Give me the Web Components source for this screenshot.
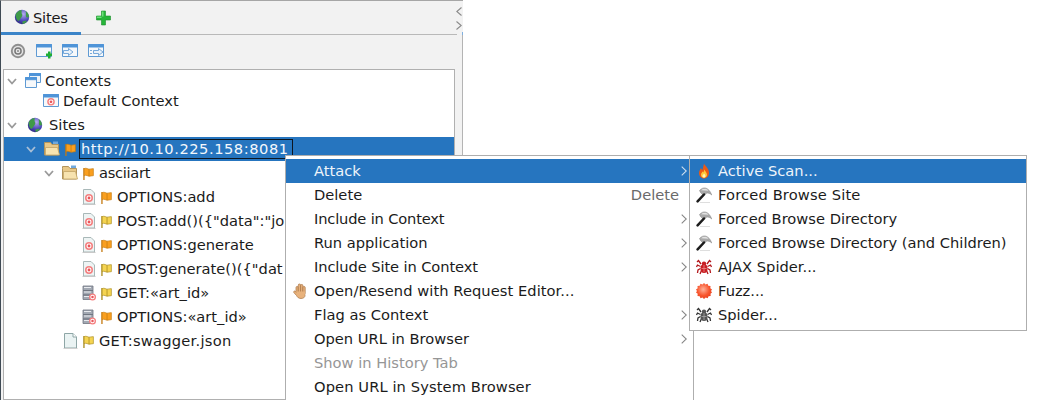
<!DOCTYPE html>
<html>
<head>
<meta charset="utf-8">
<title>Sites</title>
<style>
  html, body { margin: 0; height: 400px; overflow: hidden; background: #fff; }
  body { font: 14.67px "DejaVu Sans", sans-serif; color: #1b1b1b; }
</style>
</head>
<body>
<zap-window>
  <zap-panel>
    <zap-tabs slot="tabs"></zap-tabs>
    <zap-toolbar slot="toolbar">
      <zap-icon name="target"></zap-icon>
      <zap-icon name="winplus"></zap-icon>
      <zap-icon name="winin"></zap-icon>
      <zap-icon name="winout"></zap-icon>
    </zap-toolbar>
    <zap-tree slot="tree">
      <zap-row indent="2" open h="20"><zap-icon name="contexts"></zap-icon><span style="letter-spacing:.15px">Contexts</span></zap-row>
      <zap-row indent="39" h="20"><zap-icon name="context"></zap-icon><span>Default Context</span></zap-row>
      <zap-row indent="2" open h="24" top="2" gap="6" pad="2"><zap-icon name="globe"></zap-icon><span>Sites</span></zap-row>
      <zap-row indent="21" open selected h="24" gap="5"><zap-icon name="folder"></zap-icon><zap-icon name="flag" small></zap-icon><span style="letter-spacing:.53px">http://10.10.225.158:8081</span></zap-row>
      <zap-row indent="39" open h="24" gap="5"><zap-icon name="folder"></zap-icon><zap-icon name="flag" small></zap-icon><span style="letter-spacing:-.3px">asciiart</span></zap-row>
      <zap-row indent="76" h="24" gap="5"><zap-icon name="filetarget"></zap-icon><zap-icon name="flag" small></zap-icon><span>OPTIONS:add</span></zap-row>
      <zap-row indent="76" h="24" gap="5"><zap-icon name="filetarget"></zap-icon><zap-icon name="flag" small yellow></zap-icon><span>POST:add()({"data":"jo</span></zap-row>
      <zap-row indent="76" h="24" gap="5"><zap-icon name="filetarget"></zap-icon><zap-icon name="flag" small></zap-icon><span>OPTIONS:generate</span></zap-row>
      <zap-row indent="76" h="24" gap="5"><zap-icon name="filetarget"></zap-icon><zap-icon name="flag" small yellow></zap-icon><span>POST:generate()({"dat</span></zap-row>
      <zap-row indent="76" h="24" gap="5"><zap-icon name="server"></zap-icon><zap-icon name="flag" small yellow></zap-icon><span>GET:«art_id»</span></zap-row>
      <zap-row indent="76" h="24" gap="5"><zap-icon name="server"></zap-icon><zap-icon name="flag" small></zap-icon><span>OPTIONS:«art_id»</span></zap-row>
      <zap-row indent="58" h="24" gap="5"><zap-icon name="file"></zap-icon><zap-icon name="flag" small yellow></zap-icon><span style="letter-spacing:.25px">GET:swagger.json</span></zap-row>
    </zap-tree>
  </zap-panel>

  <zap-menu style="left:285px;top:155px;width:409px;height:260px">
    <zap-item active arrow>Attack</zap-item>
    <zap-item shortcut="Delete">Delete</zap-item>
    <zap-item arrow style="letter-spacing:-.17px">Include in Context</zap-item>
    <zap-item arrow>Run application</zap-item>
    <zap-item arrow style="letter-spacing:-.1px">Include Site in Context</zap-item>
    <zap-item style="letter-spacing:.06px"><zap-icon slot="icon" name="hand"></zap-icon>Open/Resend with Request Editor...</zap-item>
    <zap-item arrow>Flag as Context</zap-item>
    <zap-item arrow>Open URL in Browser</zap-item>
    <zap-item disabled>Show in History Tab</zap-item>
    <zap-item style="letter-spacing:.1px">Open URL in System Browser</zap-item>
  </zap-menu>

  <zap-menu style="left:689px;top:155px;width:338px;height:176px">
    <zap-item active><zap-icon slot="icon" name="flame"></zap-icon>Active Scan...</zap-item>
    <zap-item style="letter-spacing:.15px"><zap-icon slot="icon" name="hammer"></zap-icon>Forced Browse Site</zap-item>
    <zap-item><zap-icon slot="icon" name="hammer"></zap-icon>Forced Browse Directory</zap-item>
    <zap-item><zap-icon slot="icon" name="hammer"></zap-icon>Forced Browse Directory (and Children)</zap-item>
    <zap-item><zap-icon slot="icon" name="spider" red></zap-icon>AJAX Spider...</zap-item>
    <zap-item><zap-icon slot="icon" name="fuzz"></zap-icon>Fuzz...</zap-item>
    <zap-item><zap-icon slot="icon" name="spider"></zap-icon>Spider...</zap-item>
  </zap-menu>
</zap-window>

<script>
const targetMark = (cx, cy, r) => `<circle cx="${cx}" cy="${cy}" r="${r}" fill="#f47f7f"/><circle cx="${cx}" cy="${cy}" r="${r * 0.62}" fill="#fff"/><circle cx="${cx}" cy="${cy}" r="${r * 0.36}" fill="#e9555a"/>`

const win = (inner) => `<path d="M.5 1.500h15v12H.5z" fill="#f6f8fa" stroke="#5f9ad3"/><path d="M.5 1.500h15v2.500H.5z" fill="#4f94d8" stroke="#4f94d8"/>${inner}`

const spiderLegs = `<path d="M5 5 2.500 1.500 1 3M11 5l2.500-3.500L15 3M4.500 7.500 1.500 6 .5 8M11.500 7.500l3-1.500 1 2M4.500 9.500 2 11l-.5 3M11.500 9.500 14 11l.5 3M5.500 11.500 4 15M10.500 11.500l1.500 3.500" fill="none" stroke="currentColor" stroke-width="1.300"/>`

const ICONS = {
	target: `<circle cx="8" cy="8" r="7.200" fill="#8f8f8f"/><circle cx="8" cy="8" r="5.300" fill="#e4e4e4"/><circle cx="8" cy="8" r="3.800" fill="#777"/><circle cx="8" cy="8" r="2.300" fill="#e6e6e6"/><circle cx="8" cy="8" r="1" fill="#888"/>`,
	winplus: win(`<path d="M10 10.500h2V8.500h2.500v2h1.500V13h-1.500v2.500H12V13h-2z" fill="#1fae35"/>`),
	winin: win(`<path d="M1.500 7.500h5V5.500L11 9 6.500 12.500v-2h-5z" fill="#e8f1fa" stroke="#6aa0d6" stroke-width=".9"/>`),
	winout: win(`<path d="M5.500 7.500h5V5.500L15 9l-4.500 3.500v-2h-5zM2 7.500h2M2 10.500h2" fill="#e8f1fa" stroke="#6aa0d6" stroke-width=".9"/>`),
	contexts: `<path d="M4.500 .5h11v9h-11z" fill="#eef3f8" stroke="#5f9ad3"/><path d="M4.500 .5h11v2h-11z" fill="#4f94d8" stroke="#4f94d8"/><path d="M.5 4.500h11v10H.5z" fill="#f6f8fa" stroke="#5f9ad3"/><path d="M.5 4.500h11v2.200H.5z" fill="#4f94d8" stroke="#4f94d8"/>`,
	context: win(targetMark(8, 8.800, 3.800)),
	globe: `<defs><radialGradient id="g" cx=".6" cy=".3" r=".8"><stop offset="0" stop-color="#b5aef0"/><stop offset=".6" stop-color="#4a45b8"/><stop offset="1" stop-color="#27246e"/></radialGradient></defs><circle cx="8" cy="8" r="7.200" fill="url(#g)"/><path d="M2 4.500C4 2 6 1 7.500 1c.5 1.500-.5 3 .5 4 1 1.500-.5 3-1.500 4.500C5.500 11 5 12 4 12 2 10 1 6.500 2 4.500zM11.500 2c2 1 3.500 3.500 3.500 6-1 .5-2.500 1-3-.5-.5-1 .5-3.500-.5-5.500zM8.500 12.500c1.500-1 3.500-1 4.500-.5-1 1.500-2.500 2.500-4 3-.5-.5-.8-1.500-.5-2.500z" fill="#3f9a49"/>`,
	plus: `<path d="M5.500 1h4v5h5v4h-5v5h-4v-5H.500V6h5z" fill="#27b53a" stroke="#1c8f2b" stroke-width=".6"/><path d="M6 6.500V1.500h1.500v5zM1 6.500h4.500V8H1z" fill="#6fe07c"/>`,
	folder: `<path d="M.5 3.500V1.500h6l1.500 2h6.500V14H.5z" fill="#e8c888" stroke="#b2945c"/><path d="M9 .5h5v2.500H9z" fill="#6fa8dc"/><path d="M1.500 6.500h12L15.500 14H1.500z" fill="#f7e3b0" stroke="#c2a366" stroke-width=".8"/>`,
	flag: `<path d="M.8 1v11" stroke="var(--pole)" stroke-width="1.200" fill="none"/><path d="M1 1.500c2-1 3.500.5 4.500.5s2.500-.5 4-.5V8C8 8 6.500 8.500 5.500 8.500S3 7 1 8z" fill="var(--flag)" stroke="var(--pole)" stroke-width=".6"/><path d="M5.500 2v6.500" stroke="var(--pole)" stroke-width=".7" fill="none"/>`,
	filetarget: `<path d="M3.500 .5h7.500l3.500 3.500v11h-11z" fill="#eef4f4" stroke="#a9b8b8"/><path d="M2.500 15.500h13" stroke="#c8c8c8"/>${targetMark(9, 9, 4)}`,
	file: `<path d="M2.500 .5h8.500l3.500 3.500v11h-12z" fill="#eaf3f3" stroke="#8ea6a6"/><path d="M11 .5V4h3.500" fill="#fff" stroke="#8ea6a6"/><path d="M1.500 15.500h14" stroke="#cfcfcf"/>`,
	server: `<path d="M3 1h10v4.500H3zM3 5.500h10V10H3zM3 10h10v4.500H3z" fill="#a2a8b2" stroke="#6f7580" stroke-width=".8"/><path d="M4 2.500h7M4 7h7M4 11.500h7" stroke="#e8eaee"/>${targetMark(12.500, 12, 3.500)}`,
	hand: `<g fill="#e8b27c" stroke="#a87242" stroke-width=".7"><rect x="4" y="3.500" width="2.300" height="8" rx="1.100"/><rect x="6.300" y="1" width="2.300" height="9" rx="1.100"/><rect x="8.600" y="1.500" width="2.300" height="9" rx="1.100"/><rect x="10.900" y="3.500" width="2.300" height="8" rx="1.100"/></g><path d="M4.200 8.500h8.800v3.500c0 2.300-1.800 3.500-4 3.500-2.400 0-3.500-1.200-4.500-3L1.800 9.500c-.6-1 .7-2 1.500-1.200z" fill="#e8b27c"/><path d="M13 11.500v1c0 2-1.800 3-4 3-2.400 0-3.500-1.200-4.500-3L1.800 9.500c-.6-1 .7-2 1.500-1.200L4.200 9.500" fill="none" stroke="#a87242" stroke-width=".7"/>`,
	flame: `<path d="M8 .5c.8 2.500 5 4.700 5 9.200 0 3.300-2.300 5.800-5 5.800s-5-2.500-5-5.500c0-2.300 1.300-3.200 2-5 .5 1 .8 1.500 1.500 2C7 5 7.500 2.500 8 .5z" fill="#ec5a16"/><path d="M8.200 6.500c.5 1.500 2.800 2.800 2.800 5.300 0 1.800-1.300 3-3 3s-3-1.200-3-3c0-1.500 1-2.300 1.500-3.300.5.500.8.700 1 1 .3-.8.500-2 .7-3z" fill="#ffc93a"/><path d="M8 10.500c.5.800 1.500 1.300 1.500 2.500 0 1-.7 1.500-1.500 1.500S6.500 14 6.500 13c0-1 1-1.600 1.500-2.500z" fill="#fff3b5"/>`,
	hammer: `<path d="M4 15.500h10" stroke="#dedede"/><path d="M3.500 3.500C7-.5 12.500-.5 15.800 8 14 6.500 12 5.500 10 6.500L7.500 8.500 4.500 5.500z" fill="#a9a9a9" stroke="#808080" stroke-width=".5"/><path d="M5 3.300C7.500 1.300 10.500 1.300 12.500 3.800z" fill="#e2e2e2"/><path d="M1.600 14.400 8 7.500" stroke="#1d1d1d" stroke-width="2.500" stroke-linecap="round"/>`,
	spider: `<g style="color:var(--legs)">${spiderLegs}</g><ellipse cx="8" cy="4.500" rx="2.200" ry="2" fill="var(--body)"/><ellipse cx="8" cy="9.500" rx="3.500" ry="4.500" fill="var(--body)"/><path d="M8 6v7M5.500 9.500h5" stroke="var(--mark)" stroke-width=".8"/>`,
	fuzz: `<defs><radialGradient id="f" cx=".45" cy=".4" r=".7"><stop offset="0" stop-color="#ffb199"/><stop offset=".55" stop-color="#f8562e"/><stop offset="1" stop-color="#e23a1a"/></radialGradient></defs><path d="M8 0l1.500 1.500L11.500 .7l.8 2 2.200.2-.2 2.300L16 6.500 15 8l1 1.500-1.500 1.300.2 2.300-2.200.2-.8 2-2-.8L8 16l-1.500-1.500-2 .8-.8-2-2.200-.2.200-2.300L0 9.500 1 8 0 6.500l1.700-1.300-.2-2.300 2.200-.2.800-2 2 .8z" fill="url(#f)"/>`
}

class ZapIcon extends HTMLElement {
	connectedCallback() {
		const shadow = this.attachShadow({ mode: 'open' })
		const small = this.hasAttribute('small')
		shadow.innerHTML = `
      <style>
        :host {
          display: block;
          flex: none;
          width: ${small ? 11 : 16}px;
          height: ${small ? 13 : 16}px;
          --flag: ${this.hasAttribute('yellow') ? '#f5d451' : '#fa9f1e'};
          --pole: ${this.hasAttribute('yellow') ? '#a88a1c' : '#c57a10'};
          --legs: ${this.hasAttribute('red') ? '#b3171b' : '#333'};
          --body: ${this.hasAttribute('red') ? '#c81e23' : '#555'};
          --mark: ${this.hasAttribute('red') ? '#f08a8a' : '#aaa'};
        }
        svg { display: block; width: 100%; height: 100%; }
      </style>
      <svg viewBox="0 0 ${small ? '10 12' : '16 16'}">${ICONS[this.getAttribute('name')] || ''}</svg>
    `
	}
}

class ZapWindow extends HTMLElement {
	connectedCallback() {
		const shadow = this.attachShadow({ mode: 'open' })
		shadow.innerHTML = `
      <style>
        :host { display: block; position: relative; width: 1039px; height: 400px; overflow: hidden; }
      </style>
      <slot></slot>
    `
	}
}

class ZapPanel extends HTMLElement {
	connectedCallback() {
		const shadow = this.attachShadow({ mode: 'open' })
		shadow.innerHTML = `
      <style>
        :host {
          display: flex;
          flex-direction: column;
          position: relative;
          box-sizing: border-box;
          width: 463px;
          height: 400px;
          background: #f2f2f2;
          border-top: 1px solid #a6a6a6;
          border-left: 1px solid #3f4a54;
          padding-right: 6px;
        }
        /* divider on the right, blue where it meets the tab line */
        :host::after {
          content: '';
          position: absolute;
          right: 0;
          top: 31px;
          bottom: 0;
          width: 1px;
          background: linear-gradient(#7fb0e0 3px, #b4b4b4 3px);
        }
      </style>
      <slot name="tabs"></slot>
      <slot name="toolbar"></slot>
      <slot name="tree"></slot>
    `
	}
}

class ZapTabs extends HTMLElement {
	connectedCallback() {
		const shadow = this.attachShadow({ mode: 'open' })
		shadow.innerHTML = `
      <style>
        :host {
          display: flex;
          align-items: flex-end;
          height: 33px;
          border-bottom: 1px solid #b9b9b9;
          position: relative;
        }
        .tab {
          display: flex;
          align-items: center;
          gap: 3px;
          box-sizing: border-box;
          width: 80px;
          height: 33px;
          padding: 0 0 0 13px;
          border-bottom: 3px solid #3b84c8;
          margin-bottom: -1px;
          letter-spacing: -.2px;
        }
        .add { align-self: center; margin: 0 0 0 15px; }
        .arrows {
          position: absolute;
          right: -5px;
          top: 6px;
          display: flex;
          flex-direction: column;
          gap: 5px;
        }
        .arrows svg { display: block; width: 6px; height: 9px; }
      </style>
      <div class="tab"><zap-icon name="globe"></zap-icon><span>Sites</span></div>
      <div class="add"><zap-icon name="plus"></zap-icon></div>
      <div class="arrows">
        <svg viewBox="0 0 6 9"><path d="M5.500 .5 .8 4.500l4.700 4" fill="none" stroke="#8a8a8a" stroke-width="1.100"/></svg>
        <svg viewBox="0 0 6 9"><path d="M.5 .5l4.700 4-4.700 4" fill="none" stroke="#8a8a8a" stroke-width="1.100"/></svg>
      </div>
    `
	}
}

class ZapToolbar extends HTMLElement {
	connectedCallback() {
		const shadow = this.attachShadow({ mode: 'open' })
		shadow.innerHTML = `
      <style>
        :host {
          display: flex;
          align-items: center;
          gap: 10px;
          box-sizing: border-box;
          height: 34px;
          padding: 0 0 3px 9px;
        }
      </style>
      <slot></slot>
    `
	}
}

class ZapTree extends HTMLElement {
	connectedCallback() {
		const shadow = this.attachShadow({ mode: 'open' })
		shadow.innerHTML = `
      <style>
        :host {
          display: flex;
          flex-direction: column;
          flex: 1;
          margin: 0 2px;
          padding-top: 1px;
          background: #fff;
          border: 1px solid #b0b0b0;
          overflow: hidden;
        }
      </style>
      <slot></slot>
    `
	}
}

class ZapRow extends HTMLElement {
	connectedCallback() {
		const shadow = this.attachShadow({ mode: 'open' })
		const selected = this.hasAttribute('selected')
		const open = this.hasAttribute('open')
		const indent = Number(this.getAttribute('indent') || 0)
		const gap = this.getAttribute('gap') || 4
		shadow.innerHTML = `
      <style>
        :host {
          display: flex;
          align-items: center;
          flex: none;
          height: ${this.getAttribute('h') || 24}px;
          margin-top: ${this.getAttribute('top') || 0}px;
          padding-left: ${indent}px;
          white-space: nowrap;
          ${selected ? 'background: #2675bf; color: #f4f8fc;' : ''}
        }
        .twist { flex: none; width: 19px; margin-right: ${this.getAttribute('pad') || 0}px; }
        .twist svg { display: block; width: 10px; height: 7px; margin-left: 1px; }
        .items { display: flex; align-items: center; gap: ${gap}px; }
        ::slotted(span) {
          ${selected
		? 'outline: 1px solid #0d1620; padding: 0 3px 1px 1px; margin-left: -1px; line-height: 17px;'
		: 'padding-bottom: 2px;'}
        }
      </style>
      ${open ? `<div class="twist"><svg viewBox="0 0 10 7"><path d="M1 1l4 4.500L9 1" fill="none" stroke="${selected ? '#a9bfd6' : '#9a9a9a'}" stroke-width="1.800"/></svg></div>` : ''}
      <div class="items"><slot></slot></div>
    `
	}
}

class ZapMenu extends HTMLElement {
	connectedCallback() {
		const shadow = this.attachShadow({ mode: 'open' })
		shadow.innerHTML = `
      <style>
        :host {
          display: flex;
          flex-direction: column;
          position: absolute;
          box-sizing: border-box;
          background: #fff;
          border: 1px solid #aeaeae;
          padding-top: 3px;
        }
      </style>
      <slot></slot>
    `
	}
}

class ZapItem extends HTMLElement {
	connectedCallback() {
		const shadow = this.attachShadow({ mode: 'open' })
		const active = this.hasAttribute('active')
		const shortcut = this.getAttribute('shortcut')
		const colour = active ? '#eef4fa' : this.hasAttribute('disabled') ? '#969696' : '#1b1b1b'
		shadow.innerHTML = `
      <style>
        :host {
          display: flex;
          align-items: center;
          flex: none;
          height: 24px;
          padding-left: 6px;
          white-space: nowrap;
          color: ${colour};
          ${active ? 'background: #2675bf;' : ''}
        }
        .icon { flex: none; width: 16px; height: 16px; margin-right: 6px; }
        .label { flex: 1; padding-bottom: 2px; }
        .shortcut { color: #6a6a6a; margin-right: 14px; padding-bottom: 2px; }
        .arrow { flex: none; display: block; width: 6px; height: 10px; margin-right: 6px; }
      </style>
      <div class="icon"><slot name="icon"></slot></div>
      <div class="label"><slot></slot></div>
      ${shortcut ? `<div class="shortcut">${shortcut}</div>` : ''}
      ${this.hasAttribute('arrow') ? `<svg class="arrow" viewBox="0 0 6 10"><path d="M.7 .7 5.300 5 .7 9.300" fill="none" stroke="${active ? '#cfe0f0' : '#858585'}" stroke-width="1.100"/></svg>` : ''}
    `
	}
}

customElements.define('zap-icon', ZapIcon)
customElements.define('zap-window', ZapWindow)
customElements.define('zap-panel', ZapPanel)
customElements.define('zap-tabs', ZapTabs)
customElements.define('zap-toolbar', ZapToolbar)
customElements.define('zap-tree', ZapTree)
customElements.define('zap-row', ZapRow)
customElements.define('zap-menu', ZapMenu)
customElements.define('zap-item', ZapItem)
</script>
</body>
</html>
